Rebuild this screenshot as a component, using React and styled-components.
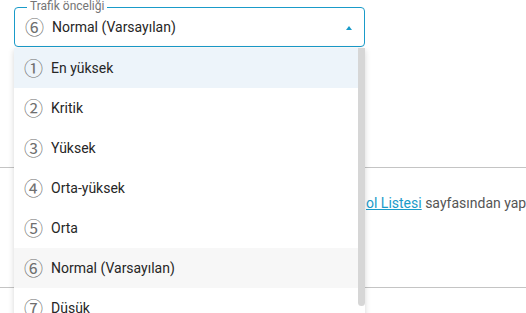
import React from "react";
import styled, { createGlobalStyle } from "styled-components";

const GlobalStyle = createGlobalStyle`
  body {
    margin: 0;
    background: #fff;
    font-family: Roboto, "Liberation Sans", sans-serif;
  }
`;

const Page = styled.div`
  position: relative;
  width: 526px;
  height: 313px;
  overflow: hidden;
  padding: 7px 0 0 14px;
  box-sizing: border-box;
`;

const Field = styled.div`
  position: relative;
  width: 351px;
  height: 40px;
  box-sizing: border-box;
  border: 1px solid #1a9bc9;
  border-radius: 4px;
  display: flex;
  align-items: center;
  padding: 0 12px 0 12px;
`;

const Legend = styled.span`
  position: absolute;
  top: -9px;
  left: 12px;
  padding: 0 3px;
  background: #fff;
  font-size: 12px;
  line-height: 14px;
  color: #757575;
`;

const Caret = styled.span`
  margin-left: auto;
  width: 0;
  height: 0;
  border-left: 3.5px solid transparent;
  border-right: 3.5px solid transparent;
  border-bottom: 4px solid #1a9bc9;
  margin-top: 2px;
`;

const OptionLabel = styled.span`
  display: flex;
  align-items: center;
  gap: 10px;
  font-size: 14px;
  color: #262626;
`;

const Num = styled.span`
  font-family: "Noto Sans CJK JP", "DejaVu Sans", sans-serif;
  font-size: 19px;
  line-height: 18px;
  color: #6f6f6f;
  width: 15px;
  display: flex;
  justify-content: center;
`;

const Backdrop = styled.div`
  display: flex;
  flex-direction: column;
  margin-left: -14px;
`;

const Rule = styled.div`
  height: 1px;
  background: #c4c4c4;
  margin-top: ${(p) => p.$top}px;
`;

const Note = styled.p`
  margin: 27px 0 0 366px;
  font-size: 14px;
  line-height: 16px;
  color: #555;
  white-space: nowrap;
`;

const Link = styled.a`
  color: #1a9bc9;
  text-decoration: underline;
`;

const Menu = styled.div`
  position: absolute;
  top: 48px;
  left: 14px;
  width: 351px;
  height: 272px;
  display: flex;
  background: #fff;
  box-shadow: 0 2px 6px rgba(0, 0, 0, 0.16);
  overflow: hidden;
`;

const List = styled.ul`
  flex: 1;
  list-style: none;
  margin: 0;
  padding: 0;
`;

const Item = styled.li`
  height: 40px;
  display: flex;
  align-items: center;
  padding-left: 12px;
  background: ${(p) => (p.$hover ? "#edf4fa" : p.$selected ? "#f7f7f7" : "#fff")};
`;

const Track = styled.div`
  width: 7px;
  padding-bottom: 14px;
  display: flex;
`;

const Thumb = styled.div`
  flex: 1;
  background: #d6d6d6;
  border-radius: 0 0 4px 4px;
`;

const levels = [
  "En yüksek",
  "Kritik",
  "Yüksek",
  "Orta-yüksek",
  "Orta",
  "Normal (Varsayılan)",
  "Düşük",
];
const circled = ["①", "②", "③", "④", "⑤", "⑥", "⑦"];

export default function App() {
  return (
    <Page>
      <GlobalStyle />
      <Field>
        <Legend>Trafik önceliği</Legend>
        <OptionLabel>
          <Num>⑥</Num>
          Normal (Varsayılan)
        </OptionLabel>
        <Caret />
      </Field>
      <Backdrop>
        <Rule $top={120} />
        <Note>
          <Link>ol Listesi</Link> sayfasından yap
        </Note>
        <Rule $top={76} />
      </Backdrop>
      <Menu>
        <List>
          {levels.map((name, i) => (
            <Item key={name} $hover={i === 0} $selected={i === 5}>
              <OptionLabel>
                <Num>{circled[i]}</Num>
                {name}
              </OptionLabel>
            </Item>
          ))}
        </List>
        <Track>
          <Thumb />
        </Track>
      </Menu>
    </Page>
  );
}
